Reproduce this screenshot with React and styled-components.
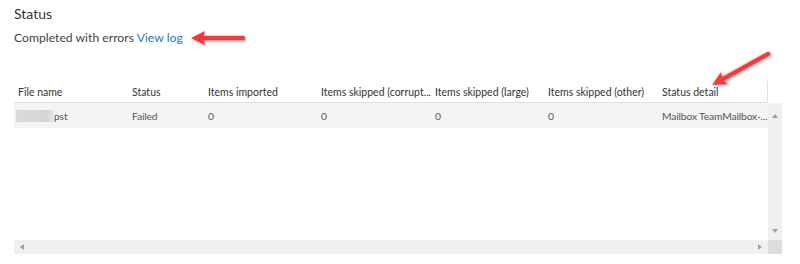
import styled, { createGlobalStyle } from "styled-components";

const GlobalStyle = createGlobalStyle`
  html, body {
    margin: 0;
    background: #ffffff;
    font-family: Lato, "Open Sans", sans-serif;
  }
`;

const columns = [
  { title: "File name", width: 114 },
  { title: "Status", width: 76 },
  { title: "Items imported", width: 113 },
  { title: "Items skipped (corrupt...", width: 114 },
  { title: "Items skipped (large)", width: 113 },
  { title: "Items skipped (other)", width: 114 },
  { title: "Status detail", width: 110 },
];

const row = ["pst", "Failed", "0", "0", "0", "0", "Mailbox TeamMailbox-..."];

function Arrow({ left, top, angle, length }) {
  return (
    <ArrowSvg
      width={length + 16}
      height="20"
      viewBox={`0 0 ${length + 16} 20`}
      style={{ left, top, transform: `rotate(${angle}deg)` }}
    >
      <defs>
        <filter id="sh" x="-20%" y="-50%" width="140%" height="200%">
          <feDropShadow dx="1" dy="1.5" stdDeviation="1" floodColor="#000" floodOpacity="0.35" />
        </filter>
      </defs>
      <g filter="url(#sh)">
        <line x1="12" y1="10" x2={length + 4} y2="10" stroke="#ee3a3e" strokeWidth="4.5" strokeLinecap="round" />
        <polygon points="2,10 16,3 14,10 16,17" fill="#ee3a3e" />
      </g>
    </ArrowSvg>
  );
}

export default function App() {
  return (
    <>
      <GlobalStyle />
      <Page>
        <Heading>Status</Heading>
        <Summary>
          Completed with errors <LogLink href="#">View log</LogLink>
        </Summary>
        <Grid>
          <TableArea>
            <HeaderRow>
              {columns.map((c) => (
                <HeadCell key={c.title} $w={c.width}>
                  {c.title}
                </HeadCell>
              ))}
            </HeaderRow>
            <BodyRow>
              {row.map((v, i) => (
                <Cell key={i} $w={columns[i].width}>
                  {i === 0 && <Blur />}
                  {v}
                </Cell>
              ))}
            </BodyRow>
          </TableArea>
          <VScroll>
            <ScrollArrow $dir="up" />
            <ScrollArrow $dir="down" />
          </VScroll>
          <HScroll>
            <ScrollArrow $dir="left" />
            <ScrollArrow $dir="right" />
          </HScroll>
          <Corner />
        </Grid>
        <Arrow left={189} top={28} angle={0} length={50} />
        <Arrow left={710} top={75} angle={-29} length={62} />
      </Page>
    </>
  );
}

const Page = styled.div`
  position: relative;
  width: 800px;
  height: 264px;
  padding: 5px 0 0 14px;
  box-sizing: border-box;
  color: #333333;
`;

const Heading = styled.div`
  font-size: 14px;
  line-height: 18px;
  color: #333333;
`;

const Summary = styled.div`
  margin-top: 6px;
  font-size: 12.2px;
  line-height: 18px;
  color: #444444;
`;

const LogLink = styled.a`
  color: #2a7ac0;
  text-decoration: none;
`;

const Grid = styled.div`
  margin-top: 34px;
  display: grid;
  grid-template-columns: 754px 14px;
  grid-template-rows: 159px 14px;
`;

const TableArea = styled.div`
  overflow: hidden;
`;

const HeaderRow = styled.div`
  display: flex;
  height: 22px;
  border-bottom: 1px solid #e1e1e1;
  border-right: 1px solid #e1e1e1;
  box-sizing: border-box;
  width: 754px;
`;

const HeadCell = styled.div`
  width: ${(p) => p.$w}px;
  flex: none;
  padding-left: 4px;
  box-sizing: border-box;
  font-size: 10.5px;
  line-height: 22px;
  color: #333333;
  white-space: nowrap;
  overflow: hidden;
`;

const BodyRow = styled.div`
  display: flex;
  height: 25px;
  background: #f4f4f4;
`;

const Cell = styled.div`
  width: ${(p) => p.$w}px;
  flex: none;
  display: flex;
  align-items: center;
  padding-left: 4px;
  box-sizing: border-box;
  font-size: 10.3px;
  letter-spacing: -0.15px;
  color: #555555;
  white-space: nowrap;
  overflow: hidden;
`;

const Blur = styled.span`
  width: 38px;
  height: 12px;
  margin-left: -2px;
  background: linear-gradient(90deg, #dcdcdc, #d4d4d4 80%, #e8e8e8);
  flex: none;
`;

const VScroll = styled.div`
  margin-top: 22px;
  background: #f0f0f0;
  display: flex;
  flex-direction: column;
  justify-content: space-between;
  align-items: center;
  padding: 11px 0 7px;
`;

const HScroll = styled.div`
  background: #f0f0f0;
  display: flex;
  justify-content: space-between;
  align-items: center;
  padding: 0 6px;
`;

const Corner = styled.div`
  background: #dcdcdc;
`;

const ScrollArrow = styled.span`
  width: 0;
  height: 0;
  border: 3px solid transparent;
  ${(p) => p.$dir === "up" && "border-bottom: 4px solid #a0a0a0; border-top-width: 0;"}
  ${(p) => p.$dir === "down" && "border-top: 4px solid #a0a0a0; border-bottom-width: 0;"}
  ${(p) => p.$dir === "left" && "border-right: 4px solid #a0a0a0; border-left-width: 0;"}
  ${(p) => p.$dir === "right" && "border-left: 4px solid #a0a0a0; border-right-width: 0;"}
`;

const ArrowSvg = styled.svg`
  position: absolute;
  transform-origin: 2px 10px;
  overflow: visible;
`;
